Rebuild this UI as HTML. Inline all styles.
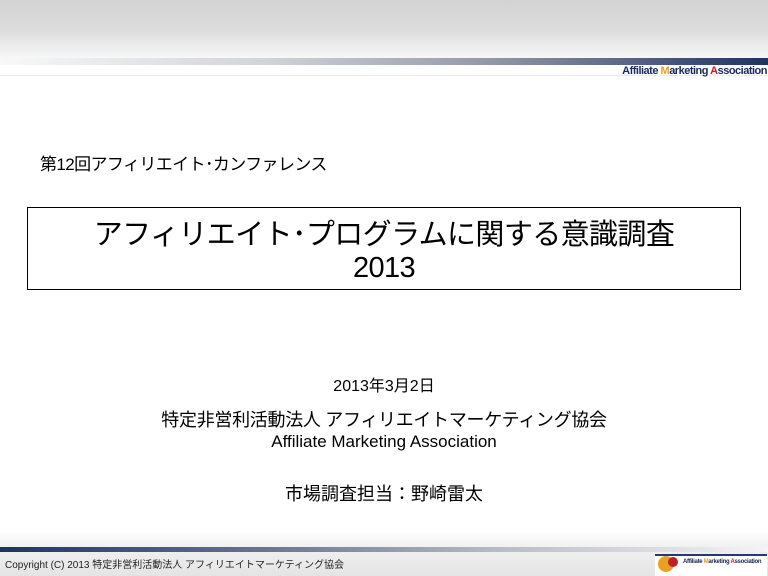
<!DOCTYPE html>
<html><head><meta charset="utf-8"><style>
body{margin:0;width:768px;height:576px;overflow:hidden;position:relative;background:#fff;font-family:"Liberation Sans","Noto Sans CJK JP",sans-serif;color:#000}
.a{position:absolute}
.c{position:absolute;left:0;width:768px;text-align:center}
</style></head><body>
<div class="a" style="left:0;top:0;width:768px;height:58px;background:linear-gradient(#d3d3d3,#dcdcdc 50%,#f7f7f7)"></div>
<div class="a" style="left:0;top:58px;width:768px;height:7px;background:linear-gradient(90deg,#f8f8f8,#d0d3d8 35%,#8e95a5 65%,#1e3264)"></div>
<div class="a" style="left:0;top:75px;width:768px;height:1px;background:#ececec"></div>
<div class="a" style="right:1px;top:65px;font:bold 11px 'Liberation Sans',sans-serif;letter-spacing:-0.5px;color:#1a2a55;white-space:nowrap"><span>A</span>ffiliate <span style="color:#e8a020">M</span>arketing <span style="color:#d01818">A</span>ssociation</div>

<div class="a" style="left:40px;top:150px;font-size:17px;letter-spacing:-0.6px;white-space:nowrap">第12回アフィリエイト･カンファレンス</div>
<div class="a" style="left:27px;top:207px;width:712px;height:81px;border:1.5px solid #000"></div>
<div class="c" style="top:219px;font-size:29px;line-height:33px;letter-spacing:-0.6px">アフィリエイト･プログラムに関する意識調査<br>2013</div>

<div class="c" style="top:372px;font-size:16px">2013年3月2日</div>
<div class="c" style="top:406px;font-size:18px;letter-spacing:-0.3px">特定非営利活動法人 アフィリエイトマーケティング協会</div>
<div class="c" style="top:432px;font-size:17px">Affiliate Marketing Association</div>
<div class="c" style="top:480px;font-size:18px">市場調査担当：野崎雷太</div>

<div class="a" style="left:0;top:530px;width:768px;height:46px;background:linear-gradient(#fff,#f0f0f0 40%,#e4e4e4)"></div>
<div class="a" style="left:0;top:547px;width:768px;height:5px;background:linear-gradient(90deg,#1e3264,#6a7590 35%,#b8bcc6 65%,#f4f4f4)"></div>
<div class="a" style="left:5px;top:556px;font-size:10px;color:#222;white-space:nowrap">Copyright (C) 2013 特定非営利活動法人 アフィリエイトマーケティング協会</div>
<div class="a" style="left:655px;top:554px;width:112px;height:20px;background:#fff;border-top:2px solid #2a3a66"></div>
<div class="a" style="left:658px;top:556px;width:16px;height:16px;border-radius:50%;background:#e8a020"></div>
<div class="a" style="left:668px;top:557px;width:10px;height:10px;border-radius:50%;background:#c02020"></div>
<div class="a" style="left:683px;top:559px;font:bold 6px 'Liberation Sans',sans-serif;letter-spacing:-0.3px;color:#1a2a55;white-space:nowrap">Affiliate <span style="color:#e8a020">M</span>arketing <span style="color:#d01818">A</span>ssociation</div>
</body></html>
